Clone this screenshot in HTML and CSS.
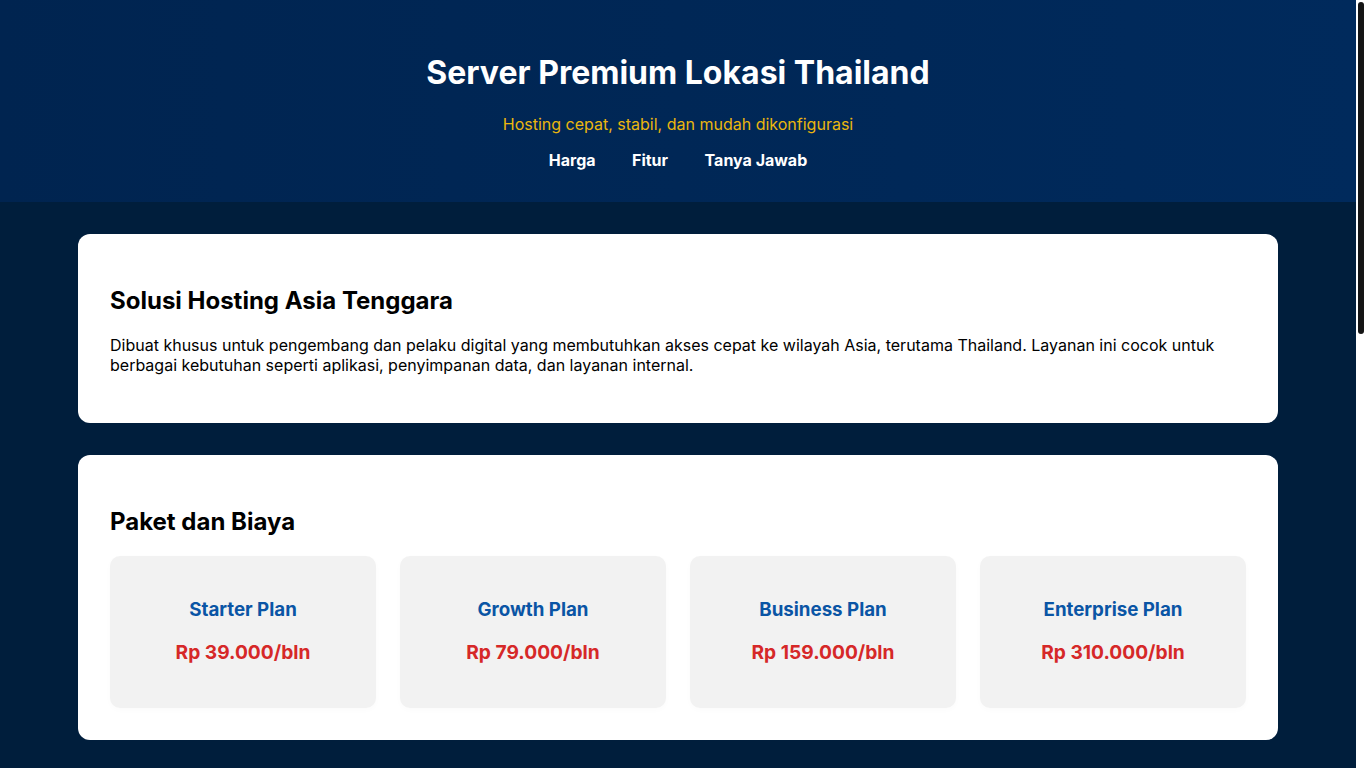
FILE: index.html
```html
<!DOCTYPE html>
<html lang="id">
<head>
    <meta charset="UTF-8">
    <meta name="viewport" content="width=device-width, initial-scale=1.0">
    <title>Server Premium Lokasi Thailand</title>

    <link rel="stylesheet" href="styles.css">

</head>
<body>
    <div id="page">
        <header id="header">
            <h1>Server Premium Lokasi Thailand</h1>
            <p class="tagline">Hosting cepat, stabil, dan mudah dikonfigurasi</p>
            <nav id="nav">
                <a href="#harga">Harga</a>
                <a href="#fitur">Fitur</a>
                <a href="#faq">Tanya Jawab</a>
            </nav>
        </header>

        <main id="main">
            <section class="card">
                <h2>Solusi Hosting Asia Tenggara</h2>
                <p>Dibuat khusus untuk pengembang dan pelaku digital yang membutuhkan akses cepat ke wilayah Asia, terutama Thailand. Layanan ini cocok untuk berbagai kebutuhan seperti aplikasi, penyimpanan data, dan layanan internal.</p>
            </section>

            <section class="card" id="harga">
                <h2>Paket dan Biaya</h2>
                <div class="plans">
                    <div class="plan">
                        <h3>Starter Plan</h3>
                        <p class="price">Rp 39.000/bln</p>
                    </div>
                    <div class="plan">
                        <h3>Growth Plan</h3>
                        <p class="price">Rp 79.000/bln</p>
                    </div>
                    <div class="plan">
                        <h3>Business Plan</h3>
                        <p class="price">Rp 159.000/bln</p>
                    </div>
                    <div class="plan">
                        <h3>Enterprise Plan</h3>
                        <p class="price">Rp 310.000/bln</p>
                    </div>
                </div>
            </section>

            <section class="card" id="fitur">
                <h2>Fitur Unggulan</h2>
                <ul class="features">
                    <li>Latensi rendah ke Thailand dan negara tetangga</li>
                    <li>Penyimpanan SSD NVMe untuk performa tinggi</li>
                    <li>Akses root penuh dan panel kontrol sederhana</li>
                    <li>Perlindungan DDoS dasar tanpa biaya tambahan</li>
                    <li>Backup mingguan otomatis</li>
                    <li>Dukungan teknis 24 jam setiap hari</li>
                </ul>
            </section>

            <section class="card" id="faq">
                <h2>Tanya Jawab</h2>
                <div class="faq-item">
                    <h3>Berapa lama proses aktivasi server?</h3>
                    <p>Server aktif dalam hitungan menit setelah pembayaran dikonfirmasi.</p>
                </div>
                <div class="faq-item">
                    <h3>Apakah bisa upgrade paket di tengah bulan?</h3>
                    <p>Bisa. Selisih biaya dihitung otomatis sesuai sisa masa aktif.</p>
                </div>
                <div class="faq-item">
                    <h3>Sistem operasi apa saja yang tersedia?</h3>
                    <p>Tersedia Ubuntu, Debian, CentOS, AlmaLinux, dan Windows Server.</p>
                </div>
                <div class="faq-item">
                    <h3>Bagaimana cara menghubungi tim dukungan?</h3>
                    <p>Melalui tiket di panel pelanggan, email, atau live chat.</p>
                </div>
            </section>
        </main>

        <footer id="footer">
            <p>&copy; 2024 Server Premium Lokasi Thailand. Semua hak dilindungi.</p>
        </footer>
    </div>

    <div class="scroll-thumb"></div>
</body>
</html>
```

FILE: styles.css
```css
* {
    box-sizing: border-box;
}

html {
    background-color: white;
}

body {
    margin: 0;
    font-family: Inter, "Noto Sans", sans-serif;
    color: #000;
}

/* leave a 10px strip on the right like the browser scrollbar */
#page {
    margin-right: 10px;
    min-height: 100vh;
    background-color: #001e3c;
}
.scroll-thumb {
    position: fixed;
    top: 2px;
    right: 2px;
    width: 6px;
    height: 332px;
    border-radius: 3px;
    background-color: #151515;
}

#header {
    padding: 2rem;
    text-align: center;
    background: linear-gradient(to right, #002450, #002a5c);
    color: white;
}
#header h1 {
    font-size: 2rem;
}
.tagline {
    color: #ebb60e;
}
#nav a {
    margin: 0 1rem;
    color: white;
    font-weight: bold;
    text-decoration: none;
}

#main {
    max-width: 1200px;
    margin: 0 auto;
    padding: 2rem 0;
}
.card {
    background-color: white;
    border-radius: 12px;
    padding: 2rem;
    margin-bottom: 2rem;
}
.card:last-child {
    margin-bottom: 0;
}
.card h2 {
    font-size: 1.5rem;
}

.plans {
    display: grid;
    grid-template-columns: repeat(4, 1fr);
    gap: 24px;
}
.plan {
    background-color: #f2f2f2;
    border-radius: 10px;
    padding: 1.5rem;
    text-align: center;
    box-shadow: 0 2px 6px rgba(0, 0, 0, 0.02);
}
.plan h3 {
    color: #0a55a5;
}
.price {
    font-size: 1.2em;
    font-weight: bold;
    color: #d62828;
}

.features {
    line-height: 1.8;
}

.faq-item h3 {
    font-size: 1.1rem;
    color: #0a55a5;
    margin-bottom: 0.4rem;
}
.faq-item p {
    margin-top: 0;
}

#footer {
    text-align: center;
    color: #a8b8cc;
    padding: 1rem 0 2rem;
    font-size: 0.9rem;
}
#footer p {
    margin: 0;
}
```
